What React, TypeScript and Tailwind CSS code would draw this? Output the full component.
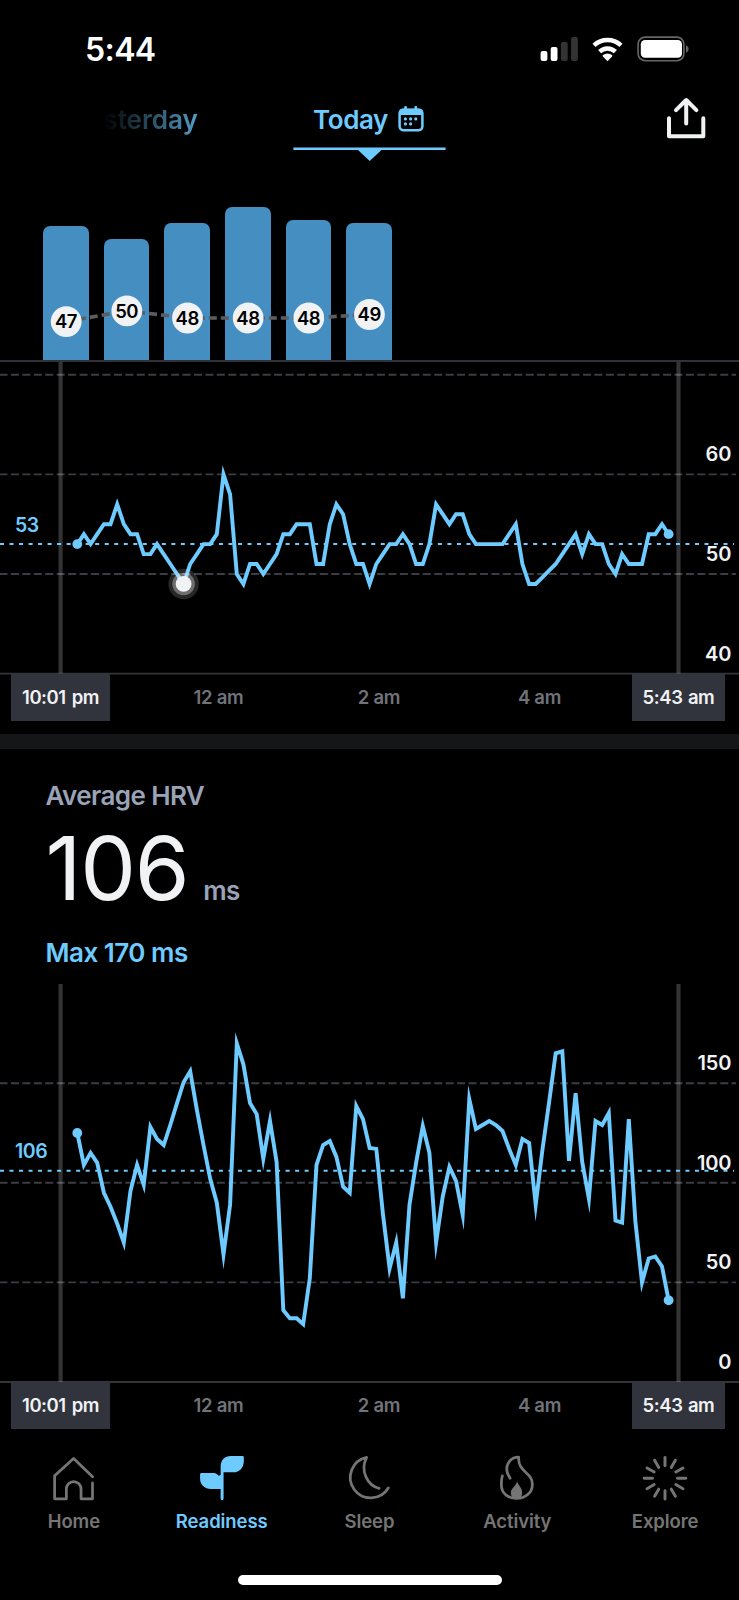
import type { ReactNode } from 'react';

const BLUE = '#6ecbff';

const nights = [
  { value: 47, height: 134, dot: 321.6 },
  { value: 50, height: 121, dot: 310.8 },
  { value: 48, height: 137, dot: 318 },
  { value: 48, height: 153, dot: 318 },
  { value: 48, height: 140, dot: 318 },
  { value: 49, height: 137, dot: 314.5 },
];

const heartRate = [
  53, 54, 53, 54, 55, 55, 57, 55, 54, 54, 52, 52, 53, 52, 51, 50, 49, 51, 52, 53, 53, 54, 60, 58, 50, 49, 51, 51, 50,
  51, 52, 54, 54, 55, 55, 55, 51, 51, 55, 57, 56, 53, 51, 51, 49, 51, 52, 53, 53, 54, 53, 51, 51, 53, 57, 56, 55, 56,
  56, 54, 53, 53, 53, 53, 53, 54, 55, 51, 49, 49, 49.67, 50.33, 51, 52, 53, 54, 52, 54, 53, 53, 51, 50, 52, 51, 51, 51,
  54, 54, 55, 54,
];

const hrv = [
  125, 109, 115, 110, 95, 88, 79.5, 70, 96, 109, 99, 128, 122, 119, 129, 140, 150.5, 156, 136.5, 119, 102, 90, 64, 89,
  170, 159.5, 140, 134.5, 112, 131, 110.5, 36, 32, 32, 29, 52, 109, 119, 121, 113, 98, 95, 138.5, 132, 117.5, 117, 84.5,
  57, 70, 42, 89, 110, 128.5, 115, 70, 93, 108, 101, 84, 142, 127, 129, 131, 129, 126, 117, 109, 122, 120, 89, 116.5,
  140, 165, 166, 111, 145, 110.5, 92, 131, 129, 135, 81, 80, 132, 80.5, 50, 62, 63, 58, 41,
];

const StatusIcons = () => (
  <svg width="154" height="28" viewBox="539 35 154 28" fill="#fff">
    <rect x="540.6" y="51" width="6.8" height="10" rx="2" />
    <rect x="550.7" y="47" width="6.8" height="14" rx="2" />
    <rect x="560.9" y="42" width="6.8" height="19" rx="2" fill="#333" />
    <rect x="571.1" y="37" width="6.8" height="24" rx="2" fill="#333" />
    <path d="M607.5 61.2l-4.6-4.7a1 1 0 0 1 .1-1.4a6.9 6.9 0 0 1 9 0a1 1 0 0 1 .1 1.4z" />
    <path d="M599.6 51.7a11.4 11.4 0 0 1 15.8 0" fill="none" stroke="#fff" strokeWidth="4.4" />
    <path d="M594 45.4a19.6 19.6 0 0 1 27 0" fill="none" stroke="#fff" strokeWidth="4.4" />
    <rect x="638.1" y="37.1" width="45.8" height="23.6" rx="7" fill="none" stroke="#666" strokeWidth="1.6" />
    <rect x="640.8" y="40" width="41.2" height="17.8" rx="4.3" />
    <path d="M686 45.2a4.2 4.2 0 0 1 0 7.8z" fill="#666" />
  </svg>
);

const CalendarIcon = () => (
  <svg width="26" height="26" viewBox="0 0 26 26">
    <rect x="1.6" y="3.9" width="22.8" height="20.3" rx="3.6" fill="none" stroke={BLUE} strokeWidth="2.5" />
    <path d="M1 9V6.5a4 4 0 0 1 4-4h16a4 4 0 0 1 4 4V9z" fill={BLUE} />
    <path d="M7.6 1.5v3M17.8 1.5v3" stroke={BLUE} strokeWidth="2.8" strokeLinecap="round" />
    <g fill={BLUE}>
      <circle cx="7.4" cy="12.9" r="1.6" />
      <circle cx="12.6" cy="12.9" r="1.6" />
      <circle cx="17.8" cy="12.9" r="1.6" />
      <circle cx="7.4" cy="17.9" r="1.6" />
      <circle cx="12.6" cy="17.9" r="1.6" />
    </g>
  </svg>
);

const ShareIcon = () => (
  <svg width="40" height="42" viewBox="0 0 40 42" fill="none" stroke="#f1f2f4" strokeWidth="4" strokeLinecap="round">
    <path d="M3 21.3V39.3H37.3V21.3" strokeLinejoin="round" />
    <path d="M20.2 26.5V3M10 13.2L20.2 3L30.4 13.2" strokeLinejoin="round" />
  </svg>
);

type ChartProps = {
  id: string;
  data: number[];
  height: number;
  base: number;
  unit: number;
  offset: number;
  ticks: number[];
  average: number;
  lowest?: number;
};

const Chart = ({ id, data, height, base, unit, offset, ticks, average, lowest }: ChartProps) => {
  const x = (i: number) => 77.3 + i * 6.644;
  const y = (v: number) => height - offset - (v - base) * unit;
  const points = data.map((v, i) => `${x(i).toFixed(1)},${y(v).toFixed(1)}`).join(' ');
  const last = data.length - 1;

  return (
    <svg id={id} className="block overflow-visible" width="739" height={height} viewBox={`0 0 739 ${height}`}>
      <g stroke="#3a3d43" strokeWidth="1.9">
        {ticks.map((t) => (
          <line key={t} x1="0" x2="736" y1={y(t)} y2={y(t)} strokeDasharray="8 3.44" strokeDashoffset="0.5" />
        ))}
        <line x1="0" x2="739" y1={y(base)} y2={y(base)} stroke="#333539" />
      </g>
      <g stroke="#ffffff" strokeOpacity="0.2" strokeWidth="4.2">
        <line x1="60.6" x2="60.6" y1="0" y2={y(base)} />
        <line x1="678.5" x2="678.5" y1="0" y2={y(base)} />
      </g>
      <line x1="0" x2="734" y1={y(average)} y2={y(average)} stroke={BLUE} strokeWidth="2" strokeDasharray="4 5.52" />
      <polyline points={points} fill="none" stroke={BLUE} strokeWidth="3.9" strokeMiterlimit="10" />
      <circle cx={x(0)} cy={y(data[0])} r="4.9" fill={BLUE} />
      <circle cx={x(last)} cy={y(data[last])} r="4.9" fill={BLUE} />
      {lowest !== undefined && (
        <g fill="#f1f2f4">
          <circle cx={x(lowest)} cy={y(data[lowest])} r="15.2" fillOpacity="0.16" />
          <circle cx={x(lowest)} cy={y(data[lowest])} r="11.3" fillOpacity="0.35" />
          <circle cx={x(lowest)} cy={y(data[lowest])} r="7.9" />
        </g>
      )}
      <g fontSize="20" fontWeight="600">
        <text x="15" y={y(average) - 12.6} fill={BLUE} fontSize="19.5" letterSpacing="-0.4">{average}</text>
        {[base, ...ticks].filter((t) => t !== 70).map((t) => (
          <text key={t} x="731.2" y={y(t) - 13.1} fill="#f1f2f4" textAnchor="end" letterSpacing="-0.2">{t}</text>
        ))}
      </g>
    </svg>
  );
};

const TimeAxis = () => (
  <div className="relative flex h-[47px] pl-[11px] text-[18.5px] leading-[46px] font-semibold tracking-[-0.3px] text-center text-[#70737a]">
    <div className="w-[99px] bg-[#31343c] text-[#f1f2f4] tracking-[-0.5px] [word-spacing:2px]">10:01 pm</div>
    <div className="ml-[28px] w-[161px]">12 am</div>
    <div className="w-[160px]">2 am</div>
    <div className="w-[161px]">4 am</div>
    <div className="ml-[12px] w-[93px] bg-[#31343c] text-[#f1f2f4] tracking-[-0.4px] [word-spacing:1px]">5:43 am</div>
  </div>
);

const NavItem = ({ label, active, children }: { label: string; active?: boolean; children: ReactNode }) => (
  <button className={`flex flex-1 flex-col items-center ${active ? 'text-[#6ecbff]' : 'text-[#757575]'}`}>
    <svg width="48" height="48" viewBox="0 0 48 48" fill="none" stroke="currentColor" strokeWidth="2.8" strokeLinecap="round" strokeLinejoin="round">
      {children}
    </svg>
    <span className="mt-[7px] text-[18.5px] leading-6 font-semibold tracking-[-0.1px]">{label}</span>
  </button>
);

const App = () => {
  return (
    <div className="flex h-[1600px] w-[739px] flex-col overflow-hidden bg-black font-['Inter',sans-serif] text-[#f1f2f4]">
      <div className="flex h-[86px] items-start justify-between pr-[46px] pl-[85px]">
        <div className="mt-[30px] text-[32px] leading-10 font-semibold tracking-[-0.6px] text-white">5:44</div>
        <div className="mt-[35px]"><StatusIcons /></div>
      </div>

      <header className="flex h-[75px] items-start text-[26px] font-semibold text-[#6ecbff]">
        <div className="w-[293px] pt-[18px] pl-[72px] leading-8 [mask-image:linear-gradient(to_right,transparent_104px,black_225px)]">
          Yesterday
        </div>
        <div className="flex w-[153px] flex-col items-center">
          <div className="flex h-[61px] w-full items-start pl-5">
            <span className="pt-[18px] leading-8 tracking-[-0.4px]">Today</span>
            <span className="mt-[19.5px] ml-[9.5px]"><CalendarIcon /></span>
          </div>
          <svg width="153" height="14" viewBox="0 0 153 14" fill={BLUE}>
            <path d="M0.4 0.4H152.6V2.9H88.5L76.7 14L65 2.9H0.4z" />
          </svg>
        </div>
        <button className="mt-[11px] ml-[220px]"><ShareIcon /></button>
      </header>

      <section className="relative flex h-[201px] items-end gap-[15px] border-b-2 border-[#2f3238] pl-[43.2px]">
        {nights.map((n, i) => (
          <div key={i} className="w-[45.6px] rounded-t-[7px] bg-[#448ec2]" style={{ height: n.height }} />
        ))}
        <svg className="absolute top-0 left-0" width="739" height="199" viewBox="0 161 739 199">
          <polyline
            points={nights.map((n, i) => `${66.2 + i * 60.65},${n.dot}`).join(' ')}
            fill="none"
            stroke="#5b5d61"
            strokeWidth="3.6"
            strokeDasharray="8 4"
          />
          {nights.map((n, i) => (
            <g key={i}>
              <circle cx={66.2 + i * 60.65} cy={n.dot} r="15.4" fill="#f1f2f4" />
              <text x={66 + i * 60.65} y={n.dot + 6.8} textAnchor="middle" fontSize="18.5" fontWeight="600" letterSpacing="-0.4" fill="#000">
                {n.value}
              </text>
            </g>
          ))}
        </svg>
      </section>

      <Chart id="heart-rate" data={heartRate} height={312} base={40} unit={9.96} offset={0.4} ticks={[50, 60, 70]} average={53} lowest={16} />
      <TimeAxis />
      <div className="mt-[13px] h-[15px] shrink-0 bg-[#151618]" />

      <section className="h-[235px] pl-[45.5px] text-[26px] font-semibold tracking-[-0.6px] text-[#9aa3b8]">
        <h2 className="pt-[31px] leading-8">Average HRV</h2>
        <div className="flex h-[104px] items-baseline">
          <span className="text-[88.5px] leading-[112px] font-[380] tracking-[-1.3px] text-[#f1f2f4]">106</span>
          <span className="ml-[15px]">ms</span>
        </div>
        <p className="pt-[21px] leading-8 tracking-[-0.5px] text-[#6ecbff]">Max 170 ms</p>
      </section>

      <Chart id="hrv" data={hrv} height={398} base={0} unit={1.992} offset={0} ticks={[50, 100, 150]} average={106} />
      <TimeAxis />

      <nav className="mt-[26px] flex h-[78px] shrink-0">
        <NavItem label="Home">
          <path d="M43 22.3L23.6 3.5L4.2 21.3V44.7H16.2V34.7a7.5 7.5 0 0 1 15 0V44.7H42.9V28.5" />
        </NavItem>
        <NavItem label="Readiness" active>
          <path
            d="M22.6 20.5V12C22.6 5 27 1 33 1H45a1.3 1.3 0 0 1 1.3 1.3V5.5C46.3 13 42 17.7 35.5 17.7H25.6V44.6a1.5 1.5 0 0 1-3 0V34.7H13C6 34.7 1.6 30.5 1.6 24V19.8a1.5 1.5 0 0 1 1.5-1.5H15C18 18.3 20.5 20.5 20.7 21.3z"
            fill="currentColor"
            stroke="none"
          />
        </NavItem>
        <NavItem label="Sleep">
          <path d="M34.4 34C22.5 31.5 14.5 16 21.6 2.4A20.9 20.9 0 1 0 43.7 33.7" />
        </NavItem>
        <NavItem label="Activity">
          <path d="M17 23.7C12.5 17 13 12 15 8.5C17.5 4 21 2.2 25.7 2.2C24.8 18 39.7 17 39.7 30C39.7 38.5 32.5 44.3 23.5 44.3C14 44.3 8 38.5 8 30C8 26.5 8.3 23.8 9 21.3" />
          <path d="M24.2 26.7C25 31 29.3 33 29.3 38.5C29.3 42 27.3 44.6 24 44.6C20 44.6 17.7 42 17.7 38.7C17.7 33.5 23 32 24.2 26.7z" fill="currentColor" stroke="none" />
        </NavItem>
        <NavItem label="Explore">
          {Array.from({ length: 12 }, (_, i) => (
            <line key={i} x1="24" x2="24" y1="2.6" y2="11" strokeWidth="3" transform={`rotate(${i * 30} 24 23.8)`} />
          ))}
        </NavItem>
      </nav>

      <div className="mx-auto mt-[42px] h-[10px] w-[264px] shrink-0 rounded-full bg-white" />
    </div>
  );
};

export default App;
